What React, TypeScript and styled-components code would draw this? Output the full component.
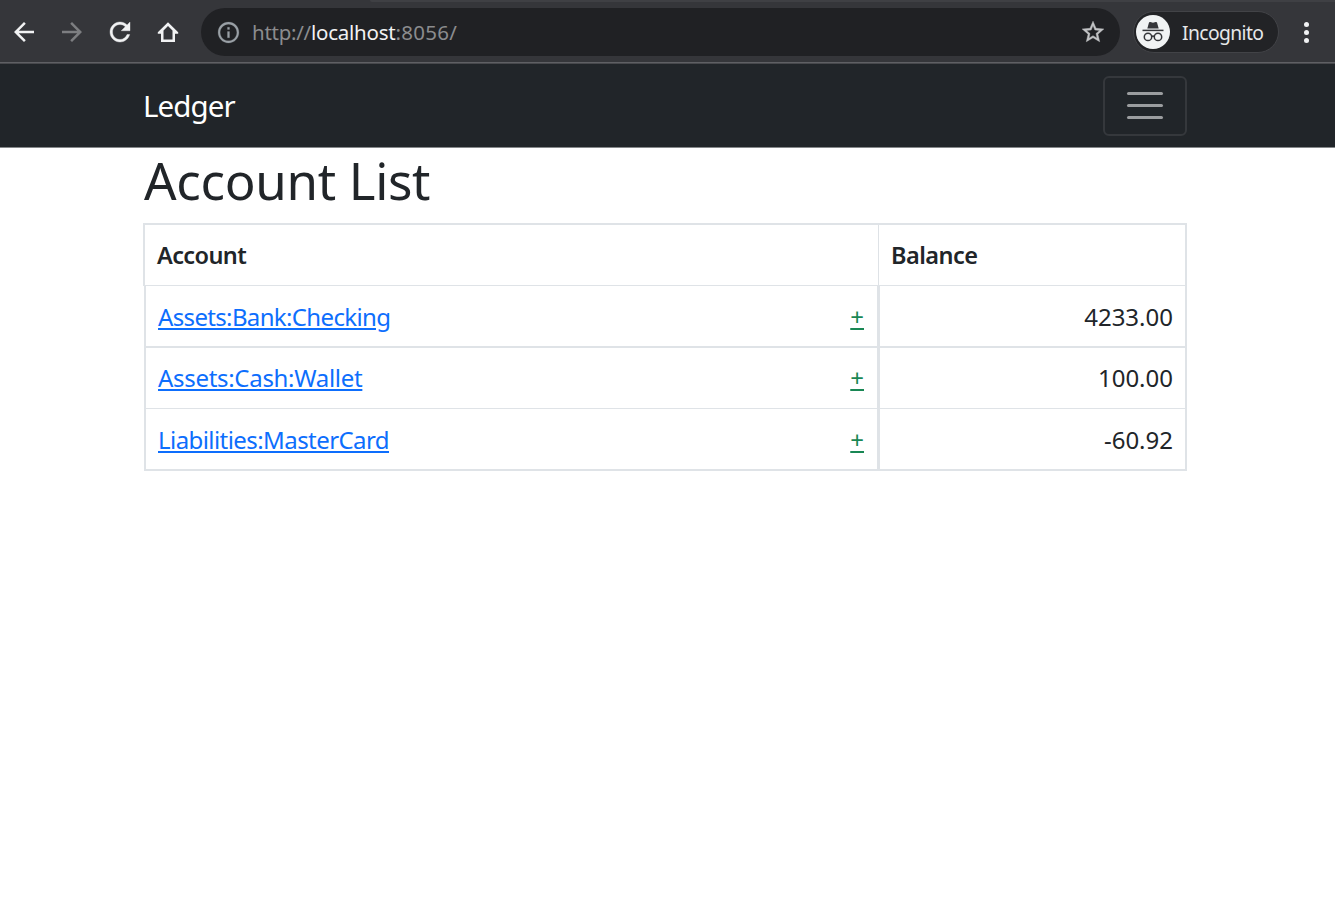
import React from "react";
import styled, { createGlobalStyle } from "styled-components";

const GlobalStyle = createGlobalStyle`
  *, *::before, *::after { box-sizing: border-box; }
  body {
    margin: 0;
    background: #fff;
    color: #212529;
    font-family: "Noto Sans", "Open Sans", sans-serif;
    overflow: hidden;
  }
`;

const Page = styled.div`
  display: flex;
  flex-direction: column;
  min-height: 900px;
`;

const TabEdge = styled.div`
  height: 2px;
  margin-left: 370px;
  background: #3f4044;
  border-bottom-left-radius: 8px;
`;

const BrowserBar = styled.div`
  height: 64px;
  background: #35363a;
  border-bottom: 1px solid #47484c;
  box-shadow: inset 0 -1px 0 #5f6064;
`;

const BarRow = styled.div`
  display: flex;
  align-items: center;
  height: 60px;
`;

const ToolButton = styled.span`
  display: flex;
  align-items: center;
  justify-content: center;
  width: 48px;
  height: 48px;
  svg { display: block; }
`;

const AddressField = styled.div`
  display: flex;
  align-items: center;
  width: 919px;
  height: 48px;
  margin-left: 9px;
  padding: 0 14px 0 15px;
  border-radius: 24px;
  background: #202124;
`;

const Url = styled.span`
  flex: 1;
  margin-left: 11px;
  font-size: 20.5px;
  line-height: 28px;
  white-space: nowrap;
  color: #8b8c8e;
`;

const UrlPart = styled.span<{ $ls: number; $host?: boolean }>`
  letter-spacing: ${(p) => p.$ls}px;
  color: ${(p) => (p.$host ? "#f1f2f3" : "inherit")};
`;

const Badge = styled.div`
  display: flex;
  align-items: center;
  width: 146px;
  height: 42px;
  margin-left: 13px;
  padding-left: 2px;
  border: 1px solid #424347;
  border-radius: 21px;
  background: #222326;
  color: #e6e7e9;
  svg { display: block; flex: none; }
`;

const BadgeLabel = styled.span`
  margin-left: 12px;
  padding-top: 1px;
  font-size: 19.3px;
  line-height: 28px;
  letter-spacing: -0.6px;
  white-space: nowrap;
`;

const MenuDots = styled.div`
  display: flex;
  flex-direction: column;
  align-items: center;
  gap: 3px;
  margin-left: 25px;
  i {
    width: 5px;
    height: 5px;
    border-radius: 50%;
    background: #f1f2f3;
  }
`;

const Navbar = styled.nav`
  height: 84px;
  background: #212529;
  border-bottom: 1px solid #85888a;
`;

const Container = styled.div`
  width: 1044px;
  margin-left: 143px;
`;

const NavRow = styled(Container)`
  display: flex;
  align-items: center;
  justify-content: space-between;
  height: 83px;
`;

const Brand = styled.span`
  font-size: 29.5px;
  line-height: 44px;
  letter-spacing: -0.9px;
  color: #fff;
`;

const Toggler = styled.button`
  display: flex;
  flex-direction: column;
  align-items: center;
  justify-content: center;
  gap: 9px;
  width: 84px;
  height: 60px;
  padding: 0;
  border: 2px solid #35383c;
  border-radius: 6px;
  background: transparent;
  i {
    width: 36px;
    height: 3px;
    border-radius: 1.5px;
    background: #9b9d9f;
  }
`;

const Title = styled.h1`
  height: 75px;
  margin: 0;
  padding-left: 1px;
  font-size: 51px;
  font-weight: 400;
  line-height: 64px;
  letter-spacing: -0.3px;
  white-space: nowrap;
`;

const Table = styled.div`
  display: flex;
  flex-direction: column;
`;

const HeaderRow = styled.div`
  display: flex;
  height: 63px;
  border: 2px solid #dfe3e7;
  border-bottom-width: 1px;
`;

const HeaderCell = styled.div<{ $first?: boolean }>`
  display: flex;
  align-items: center;
  width: ${(p) => (p.$first ? "734px" : "auto")};
  padding-left: 12px;
  border-right: ${(p) => (p.$first ? "1px solid #dee2e6" : "none")};
  font-size: 23.5px;
  font-weight: 600;
  line-height: 36px;
  letter-spacing: ${(p) => (p.$first ? "-0.62px" : "-0.52px")};
`;

const Row = styled.div<{ $line: number }>`
  display: flex;
  height: ${(p) => 60 + p.$line}px;
  margin-left: 1px;
  border: 2px solid #dfe3e7;
  border-top: 0;
  border-bottom-width: ${(p) => p.$line}px;
`;

const AccountCell = styled.div<{ $top: number }>`
  display: flex;
  align-items: center;
  justify-content: space-between;
  width: 734px;
  padding: ${(p) => p.$top}px 13px 0 12px;
  border-right: 3px solid #dfe3e7;
`;

const AmountCell = styled.div<{ $top: number }>`
  display: flex;
  flex: 1;
  align-items: center;
  justify-content: flex-end;
  padding: ${(p) => p.$top}px 12px 0 0;
  font-size: 24px;
  line-height: 36px;
`;

const Link = styled.a<{ $ls?: number; $green?: boolean }>`
  font-size: 24px;
  line-height: 36px;
  letter-spacing: ${(p) => p.$ls ?? 0}px;
  color: ${(p) => (p.$green ? "#198754" : "#0d6efd")};
  text-decoration: underline;
  text-decoration-thickness: 2px;
  text-underline-offset: 2px;
`;

const accounts = [
  { name: "Assets:Bank:Checking", balance: "4233.00", spacing: -0.65, line: 2, top: 2 },
  { name: "Assets:Cash:Wallet", balance: "100.00", spacing: -0.3, line: 1, top: 0 },
  { name: "Liabilities:MasterCard", balance: "-60.92", spacing: -0.57, line: 2, top: 2 },
];

const materialPaths = {
  back: "M20 11H7.83l5.59-5.59L12 4l-8 8 8 8 1.41-1.41L7.83 13H20v-2z",
  forward: "M12 4l-1.41 1.41L16.17 11H4v2h12.17l-5.58 5.59L12 20l8-8z",
  reload:
    "M17.65 6.35C16.2 4.9 14.21 4 12 4c-4.42 0-7.99 3.58-7.99 8s3.57 8 7.99 8c3.73 0 6.84-2.55 7.73-6h-2.08c-.82 2.33-3.04 4-5.65 4-3.31 0-6-2.69-6-6s2.69-6 6-6c1.66 0 3.14.69 4.22 1.78L13 11h7V4l-2.35 2.35z",
  info: "M11 7h2v2h-2zm0 4h2v6h-2zm1-9C6.48 2 2 6.48 2 12s4.48 10 10 10 10-4.48 10-10S17.52 2 12 2zm0 18c-4.41 0-8-3.59-8-8s3.59-8 8-8 8 3.59 8 8-3.59 8-8 8z",
  star: "M22 9.24l-7.19-.62L12 2 9.19 8.63 2 9.24l5.46 4.73L5.82 21 12 17.27 18.18 21l-1.63-7.03L22 9.24zM12 15.4l-3.76 2.27 1-4.28-3.32-2.88 4.38-.38L12 6.1l1.71 4.04 4.38.38-3.32 2.88 1 4.28L12 15.4z",
};

type GlyphProps = { name: keyof typeof materialPaths; size: number; color: string; weight?: number };

const Glyph = ({ name, size, color, weight = 0 }: GlyphProps) => (
  <svg width={size} height={size} viewBox="0 0 24 24" fill={color} stroke={color} strokeWidth={weight}>
    <path d={materialPaths[name]} />
  </svg>
);

const HomeIcon = () => (
  <svg width="24" height="24" viewBox="0 0 24 24" fill="#f1f2f3" fillRule="evenodd">
    <path d="M12 2.2 1.8 12.2v1.5H5V22h14v-8.3h3.2v-1.5zM12 5.9l4.5 4.5v9.1h-9v-9.1z" />
  </svg>
);

const IncognitoIcon = () => (
  <svg width="34" height="34" viewBox="0 0 34 34">
    <circle cx="17" cy="17" r="17" fill="#f1f3f4" />
    <path
      d="M11.3 13.6 13 7.6c.2-.6.7-.8 1.3-.6l2.7.8 2.7-.8c.6-.2 1.1 0 1.3.6l1.7 6z"
      fill="#35363a"
    />
    <path d="M6.5 15.4h21" stroke="#35363a" strokeWidth="1.5" />
    <g fill="none" stroke="#35363a" strokeWidth="1.5">
      <circle cx="12" cy="21.9" r="3.7" />
      <circle cx="22" cy="21.9" r="3.7" />
      <path d="M15.6 21.6q1.4-1 2.8 0" />
    </g>
  </svg>
);

export default function App() {
  return (
    <Page>
      <GlobalStyle />
      <BrowserBar>
        <TabEdge />
        <BarRow>
          <ToolButton><Glyph name="back" size={30} color="#f1f2f3" /></ToolButton>
          <ToolButton><Glyph name="forward" size={30} color="#7d7e81" /></ToolButton>
          <ToolButton><Glyph name="reload" size={30} color="#f1f2f3" weight={0.3} /></ToolButton>
          <ToolButton><HomeIcon /></ToolButton>
          <AddressField>
            <Glyph name="info" size={25} color="#9aa0a6" weight={0.2} />
            <Url>
              <UrlPart $ls={-0.28}>http://</UrlPart>
              <UrlPart $ls={-0.22} $host>localhost</UrlPart>
              <UrlPart $ls={0.25}>:8056/</UrlPart>
            </Url>
            <Glyph name="star" size={26} color="#c3c4c6" weight={0.4} />
          </AddressField>
          <Badge>
            <IncognitoIcon />
            <BadgeLabel>Incognito</BadgeLabel>
          </Badge>
          <MenuDots><i /><i /><i /></MenuDots>
        </BarRow>
      </BrowserBar>
      <Navbar>
        <NavRow>
          <Brand>Ledger</Brand>
          <Toggler aria-label="Toggle navigation"><i /><i /><i /></Toggler>
        </NavRow>
      </Navbar>
      <Container>
        <Title>Account List</Title>
        <Table>
          <HeaderRow>
            <HeaderCell $first>Account</HeaderCell>
            <HeaderCell>Balance</HeaderCell>
          </HeaderRow>
          {accounts.map((a) => (
            <Row key={a.name} $line={a.line}>
              <AccountCell $top={a.top}>
                <Link $ls={a.spacing}>{a.name}</Link>
                <Link $green>+</Link>
              </AccountCell>
              <AmountCell $top={a.top}>{a.balance}</AmountCell>
            </Row>
          ))}
        </Table>
      </Container>
    </Page>
  );
}
